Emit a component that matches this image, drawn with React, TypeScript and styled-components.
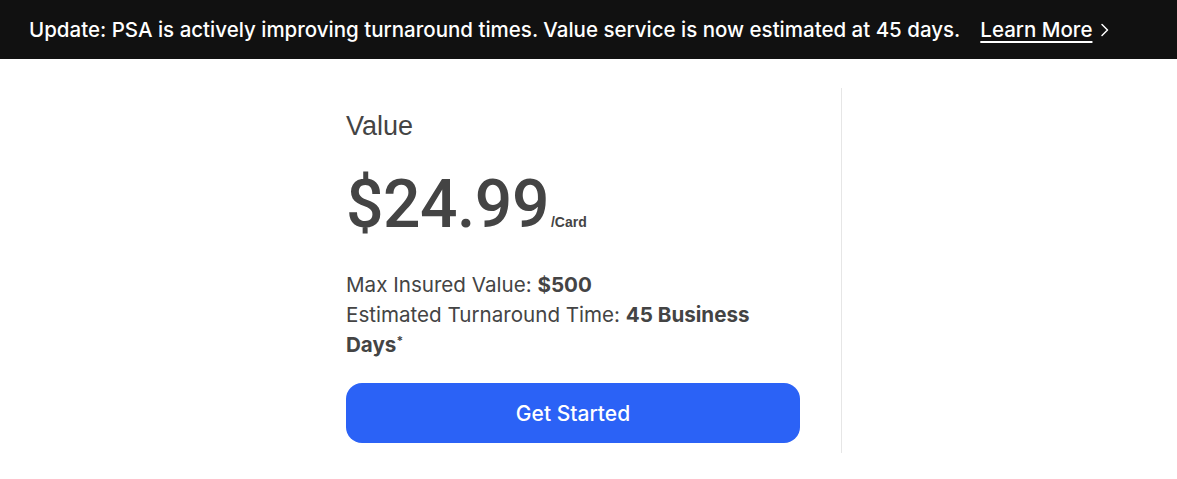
import React from "react";
import styled, { createGlobalStyle } from "styled-components";

const GlobalStyle = createGlobalStyle`
  html, body {
    margin: 0;
    padding: 0;
    background: #ffffff;
    font-family: Inter, "Noto Sans", sans-serif;
  }
`;

function Chevron() {
  return (
    <svg width="10" height="14" viewBox="0 0 10 14" fill="none">
      <path d="M2 1.5L7.5 7L2 12.5" stroke="#ffffff" strokeWidth="1.5" strokeLinecap="round" strokeLinejoin="round" />
    </svg>
  );
}

function App() {
  return (
    <Page>
      <GlobalStyle />
      <Banner>
        <BannerText>
          Update: PSA is actively improving turnaround times. Value service is now estimated at 45 days.
        </BannerText>
        <LearnMore href="#">
          <span>Learn More</span>
          <Chevron />
        </LearnMore>
      </Banner>
      <Plans>
        <PlanColumn>
          <PlanName>Value</PlanName>
          <PriceRow>
            <Price>$24.99</Price>
            <PerCard>/Card</PerCard>
          </PriceRow>
          <Details>
            <div>
              Max Insured Value: <strong>$500</strong>
            </div>
            <div>
              Estimated Turnaround Time: <strong>45 Business</strong>
            </div>
            <div>
              <strong>Days</strong>
              <sup>*</sup>
            </div>
          </Details>
          <StartButton>Get Started</StartButton>
        </PlanColumn>
      </Plans>
    </Page>
  );
}

const Page = styled.div`
  width: 1177px;
  min-height: 479px;
  background: #fff;
`;

const Banner = styled.div`
  height: 59px;
  background: #111111;
  color: #fff;
  display: flex;
  align-items: center;
  padding-left: 29px;
  box-sizing: border-box;
  font-size: 20.5px;
  font-weight: 500;
  white-space: nowrap;
`;

const BannerText = styled.span``;

const LearnMore = styled.a`
  display: flex;
  align-items: center;
  gap: 8px;
  margin-left: 20px;
  color: #fff;
  text-decoration: none;

  span {
    text-decoration: underline;
    text-underline-offset: 4px;
    text-decoration-thickness: 1.5px;
  }
`;

const Plans = styled.div`
  display: flex;
  padding: 29px 0 0 330px;
`;

const PlanColumn = styled.div`
  width: 512px;
  box-sizing: border-box;
  padding: 20px 16px 10px 16px;
  border-right: 1px solid #e6e6e6;
  color: #444444;
`;

const PlanName = styled.div`
  font-family: "Liberation Sans", Arial, sans-serif;
  font-size: 27px;
  line-height: 36px;
`;

const PriceRow = styled.div`
  display: flex;
  align-items: baseline;
  margin-top: 23px;
`;

const Price = styled.span`
  font-family: Roboto, "Liberation Sans", Arial, sans-serif;
  font-size: 66px;
  font-weight: 500;
  line-height: 76px;
  letter-spacing: -0.5px;
`;

const PerCard = styled.span`
  font-family: "Liberation Sans", Arial, sans-serif;
  font-size: 14px;
  font-weight: 700;
  margin-left: 2px;
`;

const Details = styled.div`
  margin-top: 27px;
  font-size: 20.6px;
  line-height: 30px;

  strong {
    font-weight: 700;
  }

  sup {
    font-size: 12px;
    font-weight: 700;
    line-height: 1;
    vertical-align: 0.55em;
  }
`;

const StartButton = styled.button`
  display: block;
  margin-top: 23px;
  width: 454px;
  height: 60px;
  border: none;
  border-radius: 16px;
  background: #2b62f6;
  color: #fff;
  font-family: Inter, "Noto Sans", sans-serif;
  font-size: 21px;
  font-weight: 500;
  cursor: pointer;
`;

export default App;
